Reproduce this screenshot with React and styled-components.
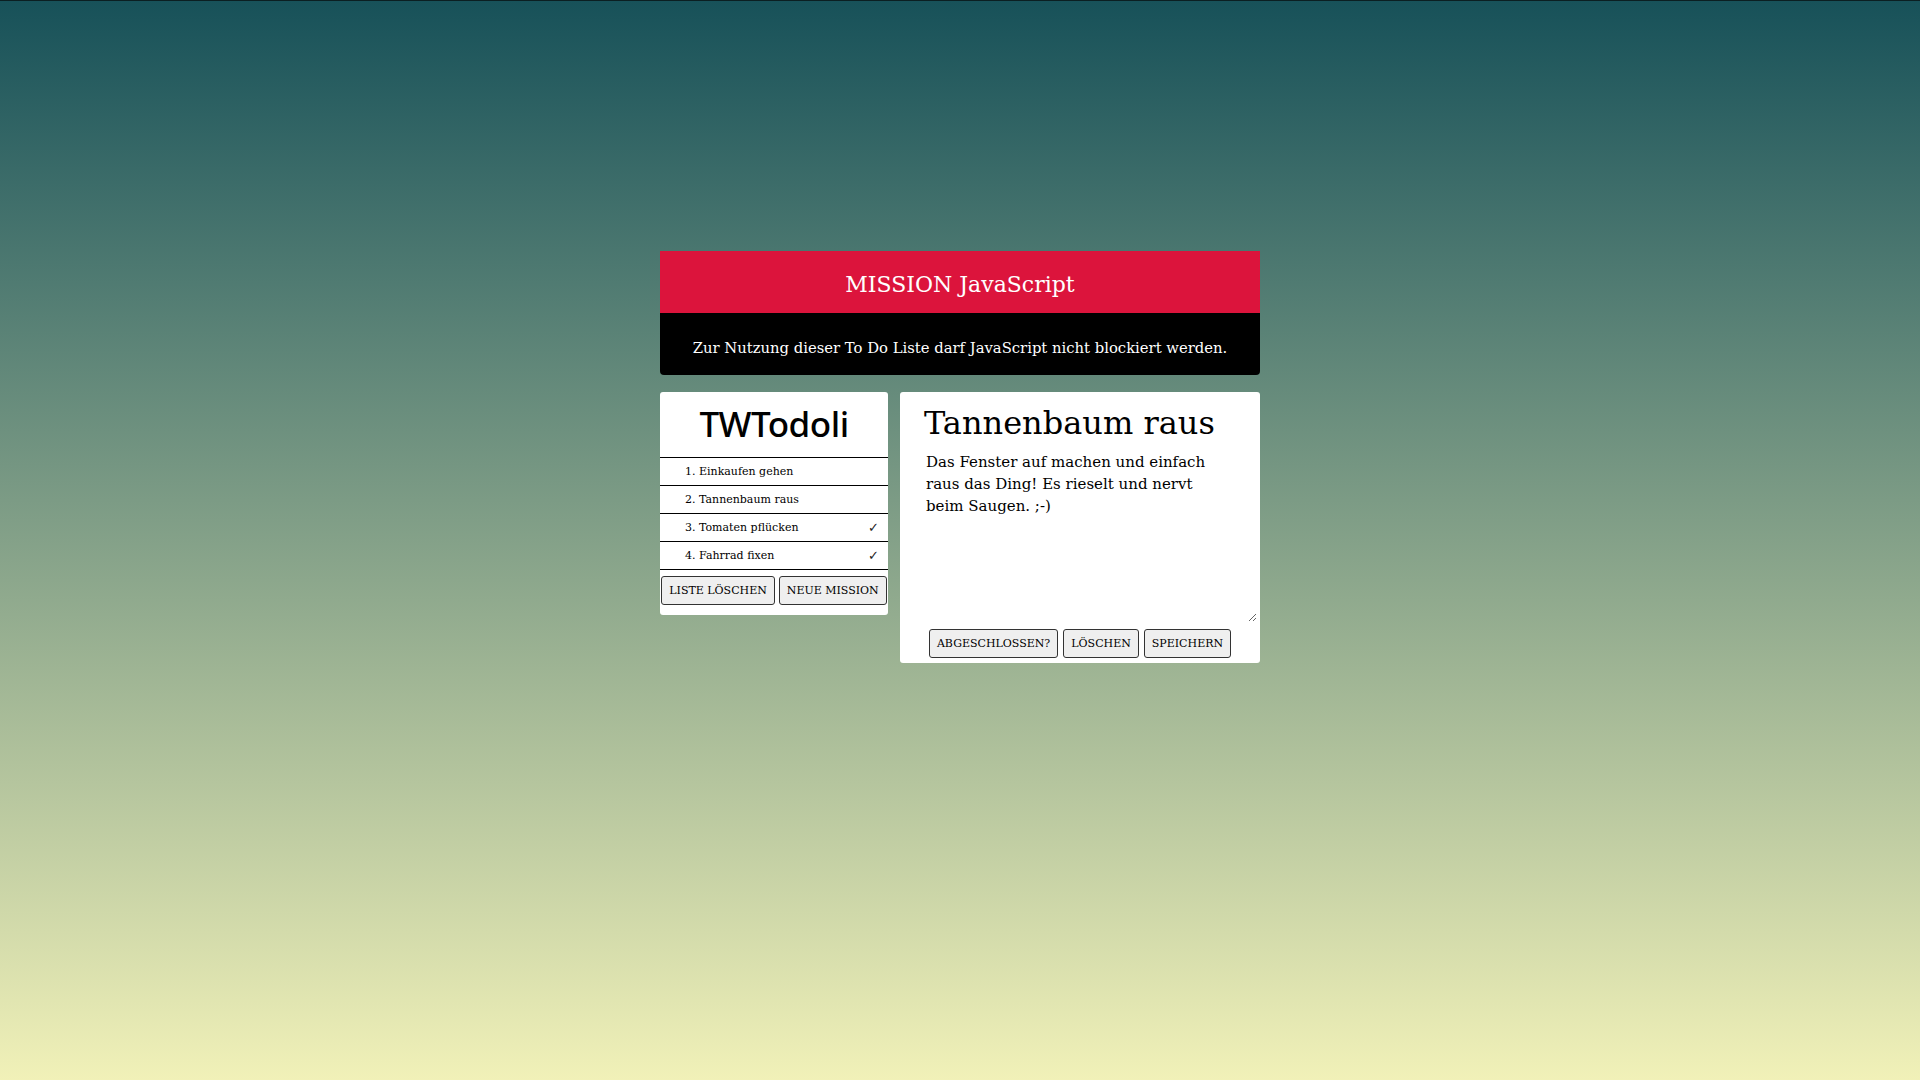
import React from "react";
import styled, { createGlobalStyle } from "styled-components";

const GlobalStyle = createGlobalStyle`
  html, body {
    margin: 0;
    padding: 0;
  }
  body {
    min-height: 100vh;
    border-top: 1px solid #0b1f22;
    box-sizing: border-box;
    background: linear-gradient(to bottom, #175159 0%, #f1f1b8 100%);
    font-family: "DejaVu Serif", "Liberation Serif", serif;
  }
`;

const Page = styled.div`
  width: 600px;
  margin: 0 auto;
  padding-top: 250px;
`;

const Header = styled.header`
  border-radius: 0 0 4px 4px;
  overflow: hidden;
  color: #fff;
  text-align: center;
`;

const Title = styled.h1`
  margin: 0;
  height: 57px;
  padding-top: 5px;
  line-height: 57px;
  background: #dc143c;
  font-weight: normal;
  font-size: 22px;
`;

const Notice = styled.p`
  margin: 0;
  height: 54px;
  padding-top: 8px;
  line-height: 54px;
  background: #000;
  font-size: 14.8px;
`;

const Columns = styled.main`
  display: flex;
  align-items: flex-start;
  gap: 12px;
  margin-top: 17px;
`;

const Panel = styled.section`
  width: ${(p) => p.$width}px;
  background: #fff;
  border-radius: 3px;
  box-sizing: border-box;
`;

const AppName = styled.h2`
  margin: 0;
  height: 65px;
  line-height: 64px;
  text-align: center;
  font-family: "Noto Sans", sans-serif;
  font-weight: 500;
  font-size: 35px;
  letter-spacing: -0.5px;
  color: #000;
`;

const List = styled.ol`
  margin: 0;
  padding: 0;
  list-style: none;
  border-top: 1px solid #000;
`;

const Item = styled.li`
  display: flex;
  justify-content: space-between;
  align-items: center;
  height: 27px;
  padding: 0 9px 0 25px;
  border-bottom: 1px solid #000;
  font-size: 11px;
  color: #000;
`;

const Check = styled.span`
  font-family: "DejaVu Sans", sans-serif;
  font-weight: 200;
  font-size: 13px;
  color: #222;
`;

const ButtonRow = styled.div`
  display: flex;
  justify-content: center;
  gap: ${(p) => p.$gap}px;
  padding: ${(p) => p.$pad};
`;

const Button = styled.button`
  height: 29px;
  padding: 0 7px;
  background: #efefef;
  border: 1px solid #333;
  border-radius: 3px;
  font-family: "DejaVu Serif", "Liberation Serif", serif;
  font-size: 11px;
  text-transform: uppercase;
  color: #000;
  cursor: pointer;
`;

const Detail = styled.div`
  padding: 0 3px 0 24px;
`;

const DetailTitle = styled.h2`
  margin: 0;
  padding: 8px 0 5px;
  height: 46px;
  font-weight: normal;
  font-size: 32px;
  line-height: 46px;
  color: #000;
`;

const Notes = styled.textarea`
  display: block;
  width: 100%;
  height: 171px;
  box-sizing: border-box;
  margin: 0;
  padding: 0 2px;
  border: none;
  outline: none;
  font-family: "DejaVu Serif", "Liberation Serif", serif;
  font-size: 15px;
  line-height: 22px;
  color: #000;
  background: transparent;
`;

const todos = [
  { text: "Einkaufen gehen", done: false },
  { text: "Tannenbaum raus", done: false },
  { text: "Tomaten pflücken", done: true },
  { text: "Fahrrad fixen", done: true },
];

export default function App() {
  return (
    <>
      <GlobalStyle />
      <Page>
        <Header>
          <Title>MISSION JavaScript</Title>
          <Notice>Zur Nutzung dieser To Do Liste darf JavaScript nicht blockiert werden.</Notice>
        </Header>
        <Columns>
          <Panel $width={228}>
            <AppName>TWTodoli</AppName>
            <List>
              {todos.map((t, i) => (
                <Item key={t.text}>
                  <span>
                    {i + 1}. {t.text}
                  </span>
                  {t.done && <Check>✓</Check>}
                </Item>
              ))}
            </List>
            <ButtonRow $gap={4} $pad="6px 0 10px">
              <Button>Liste löschen</Button>
              <Button>Neue Mission</Button>
            </ButtonRow>
          </Panel>
          <Panel $width={360}>
            <Detail>
              <DetailTitle>Tannenbaum raus</DetailTitle>
              <Notes
                readOnly
                defaultValue={"Das Fenster auf machen und einfach\nraus das Ding! Es rieselt und nervt\nbeim Saugen. ;-)"}
              />
            </Detail>
            <ButtonRow $gap={5} $pad="7px 0 5px">
              <Button>Abgeschlossen?</Button>
              <Button>Löschen</Button>
              <Button>Speichern</Button>
            </ButtonRow>
          </Panel>
        </Columns>
      </Page>
    </>
  );
}
